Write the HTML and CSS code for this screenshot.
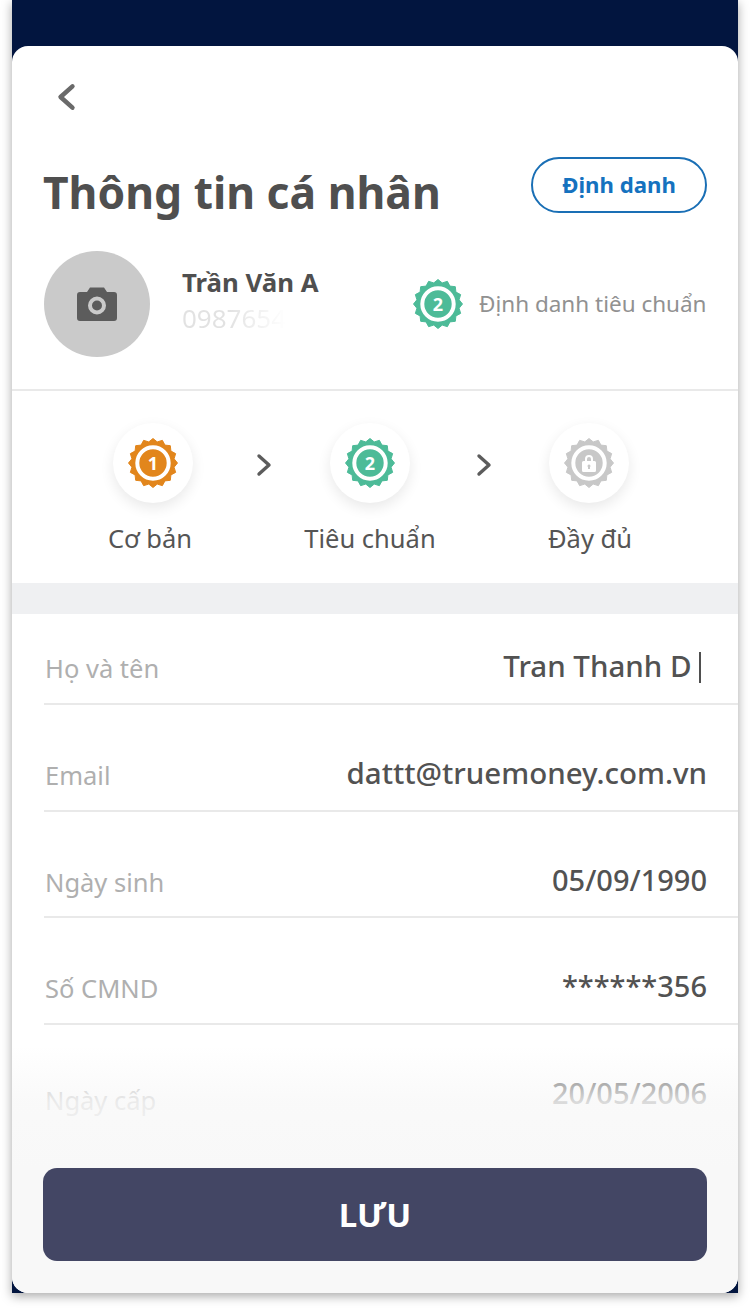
FILE: index.html
```html
<!DOCTYPE html>
<html lang="vi">
<head>
<meta charset="utf-8">
<title>Thông tin cá nhân</title>
<link rel="stylesheet" href="styles.css">
</head>
<body>
<svg class="defs" width="0" height="0" aria-hidden="true">
  <symbol id="seal" viewBox="0 0 50 50">
    <path transform="translate(25 25)" fill="currentColor" stroke="currentColor" stroke-width="1" stroke-linejoin="round" d="M0-24.500 4.190-21.090 9.380-22.640 11.950-17.880 17.320-17.320 17.880-11.950 22.640-9.380 21.090-4.190 24.500 0 21.090 4.190 22.640 9.380 17.880 11.950 17.320 17.320 11.950 17.880 9.380 22.640 4.190 21.090 0 24.500-4.190 21.090-9.380 22.640-11.950 17.880-17.320 17.320-17.880 11.950-22.640 9.380-21.090 4.190-24.500 0-21.090-4.190-22.640-9.380-17.880-11.950-17.320-17.320-11.950-17.880-9.380-22.640-4.190-21.090z"/>
    <circle cx="25" cy="25" r="15.700" fill="none" stroke="#fff" stroke-width="4"/>
  </symbol>
  <symbol id="chev" viewBox="0 0 16 24">
    <path d="M3 3l10 9-10 9" fill="none" stroke="currentColor" stroke-width="3.4" stroke-linecap="round" stroke-linejoin="round"/>
  </symbol>
</svg>
<div class="phone">
  <main class="card">
    <header class="profile">
      <div class="backbar">
        <svg class="back" viewBox="0 0 16 24"><path d="M13 3L3 12l10 9" fill="none" stroke="currentColor" stroke-width="3.800" stroke-linecap="round" stroke-linejoin="round"/></svg>
      </div>
      <div class="titlebar">
        <h1 class="title">Thông tin cá nhân</h1>
        <button class="idbtn">Định danh</button>
      </div>
      <div class="user">
        <div class="avatar">
          <svg class="cam" viewBox="0 0 40 36"><path fill-rule="evenodd" d="M13 1.500h14l3 4.500h7a3 3 0 0 1 3 3v23a3 3 0 0 1-3 3H3a3 3 0 0 1-3-3V9a3 3 0 0 1 3-3h7zM20 10.500a9 9 0 1 0 0 18 9 9 0 0 0 0-18zM20 14.500a5 5 0 1 1 0 10 5 5 0 0 1 0-10z"/></svg>
        </div>
        <div class="who">
          <div class="name">Trần Văn A</div>
          <div class="phoneno">0987654</div>
        </div>
        <div class="level">
          <span class="seal seal-green">
            <svg class="seal-svg"><use href="#seal"/></svg>
            <span class="seal-num">2</span>
          </span>
          <span class="level-text">Định danh tiêu chuẩn</span>
        </div>
      </div>
    </header>

    <section class="steps">
      <div class="step">
        <div class="step-disc disc-a"><span class="seal seal-orange"><svg class="seal-svg"><use href="#seal"/></svg><span class="seal-num">1</span></span></div>
        <div class="step-label">Cơ bản</div>
      </div>
      <svg class="chev"><use href="#chev"/></svg>
      <div class="step">
        <div class="step-disc"><span class="seal seal-green"><svg class="seal-svg"><use href="#seal"/></svg><span class="seal-num">2</span></span></div>
        <div class="step-label">Tiêu chuẩn</div>
      </div>
      <svg class="chev"><use href="#chev"/></svg>
      <div class="step">
        <div class="step-disc disc-c"><span class="seal seal-grey"><svg class="seal-svg"><use href="#seal"/></svg>
          <svg class="lock" viewBox="0 0 14 18"><path fill-rule="evenodd" d="M3 7V5a4 4 0 0 1 8 0v2h1.500A1.500 1.500 0 0 1 14 8.500v8a1.500 1.500 0 0 1-1.500 1.500h-11A1.500 1.500 0 0 1 0 16.500v-8A1.500 1.500 0 0 1 1.500 7zM5 7h4V5a2 2 0 0 0-4 0zM7 10.500a1.500 1.500 0 0 0-1 2.600V15h2v-1.900a1.500 1.500 0 0 0-1-2.600z"/></svg>
        </span></div>
        <div class="step-label">Đầy đủ</div>
      </div>
    </section>

    <div class="band"></div>

    <section class="fields">
      <div class="row row-first"><span class="key">Họ và tên</span><span class="val">Tran Thanh D<i class="caret"></i></span></div>
      <div class="row"><span class="key">Email</span><span class="val">dattt@truemoney.com.vn</span></div>
      <div class="row"><span class="key">Ngày sinh</span><span class="val val-num">05/09/1990</span></div>
      <div class="row"><span class="key">Số CMND</span><span class="val val-num">******356</span></div>
      <div class="row row-last"><span class="key">Ngày cấp</span><span class="val val-num">20/05/2006</span></div>
    </section>

    <div class="fade"></div>
    <footer class="footer">
      <button class="save">LƯU</button>
    </footer>
  </main>
</div>
</body>
</html>
```

FILE: styles.css
```css
* { box-sizing: border-box; }
html, body { margin: 0; padding: 0; background: #fff; }
body {
  width: 750px;
  height: 1308px;
  overflow: hidden;
  font-family: "Noto Sans", sans-serif;
  color: #4f4f4f;
  padding: 0 12px;
}
.defs { display: block; height: 0; }

.phone {
  width: 726px;
  height: 1293px;
  padding-top: 46px;
  background: #02153f;
  box-shadow: 0 3px 10px rgba(0, 0, 0, .35);
}
.card {
  position: relative;
  height: 1247px;
  background: #fff;
  border-radius: 16px;
  overflow: hidden;
  display: flex;
  flex-direction: column;
}

.profile {
  height: 345px;
  padding: 0 31px 0 32px;
  border-bottom: 2px solid #e9e9e9;
  flex: none;
}
.backbar { height: 102px; padding: 36px 0 0 13px; }
.back { display: block; width: 19px; height: 30px; color: #6a6a6a; }
.titlebar { display: flex; justify-content: space-between; align-items: flex-start; height: 102px; }
.title { margin: 12px 0 0 -1px; font-size: 44.400px; line-height: 64px; font-weight: 700; color: #4f4f4f; white-space: nowrap; }
.idbtn {
  width: 176px;
  height: 56px;
  margin-top: 9px;
  border: 2px solid #1a6fb5;
  border-radius: 28px;
  background: #fff;
  color: #1572bf;
  font: 700 22.200px/1 "Noto Sans", sans-serif;
}

.user { display: flex; align-items: flex-start; }
.avatar {
  width: 106px;
  height: 106px;
  margin-top: 1px;
  border-radius: 50%;
  background: #cacaca;
  display: flex;
  align-items: center;
  justify-content: center;
  flex: none;
}
.cam { width: 40px; height: 36px; fill: #5c5c5c; }
.who { margin-left: 32px; width: 231px; flex: none; }
.name { margin-top: 14px; font-size: 25.800px; line-height: 36px; font-weight: 700; color: #4f4f4f; }
.phoneno {
  font-size: 26px;
  line-height: 36px;
  width: 104px;
  background: linear-gradient(to right, #e2e2e2 45%, #fff 100%);
  -webkit-background-clip: text;
  background-clip: text;
  color: transparent;
}
.level { display: flex; align-items: center; margin-top: 29px; gap: 16px; white-space: nowrap; }
.level-text { font-size: 22.500px; line-height: 50px; color: #919191; }

.seal { position: relative; display: flex; align-items: center; justify-content: center; width: 50px; height: 50px; flex: none; }
.seal-green { color: #4dbb98; }
.seal-orange { color: #e2861c; }
.seal-grey { color: #c8c8c8; }
.seal-svg { position: absolute; inset: 0; width: 50px; height: 50px; }
.seal-num { position: relative; font-size: 18px; line-height: 1; font-weight: 700; color: #fff; }
.lock { position: relative; width: 14px; height: 18px; fill: #fff; }

.steps {
  height: 192px;
  flex: none;
  display: flex;
  align-items: flex-start;
  padding: 32px 0 0 71px;
}
.step { width: 134px; display: flex; flex-direction: column; align-items: center; flex: none; }
.step-disc {
  width: 80px;
  height: 80px;
  border-radius: 50%;
  background: #fff;
  box-shadow: 0 5px 14px rgba(0, 0, 0, .09);
  display: flex;
  align-items: center;
  justify-content: center;
}
.disc-a { margin-left: 6px; }
.disc-c { margin-left: -2px; }
.step-label { margin-top: 17px; font-size: 25.500px; line-height: 36px; color: #555; white-space: nowrap; }
.chev { width: 16px; height: 24px; margin: 30px 31px 0 39px; color: #5c5c5c; flex: none; }

.band { height: 31px; flex: none; background: #eff0f2; }

.fields { flex: none; padding-left: 32px; }
.row {
  height: 106.500px;
  padding: 16px 31px 0 0;
  display: flex;
  justify-content: space-between;
  border-bottom: 2px solid #e9e9e9;
}
.row-first { height: 91px; padding-top: 0; }
.row-last { border-bottom: 0; }
.key { padding: 36px 0 0 1px; font-size: 25.500px; line-height: 36px; color: #afafaf; }
.val { padding-top: 31px; font-size: 29.500px; line-height: 42px; font-weight: 500; color: #525252; white-space: nowrap; }
.val-num { font-size: 29px; }
.row-last .key { padding-top: 41px; }
.caret { display: inline-block; width: 2.500px; height: 31px; margin: 0 6px 0 7px; vertical-align: -6px; background: #4f4f4f; }

.fade {
  position: absolute;
  left: 0;
  right: 0;
  top: 1000px;
  height: 125px;
  background: linear-gradient(to bottom, rgba(248, 248, 248, 0), rgba(248, 248, 248, .82) 45%, #f8f8f8);
}
.footer {
  position: absolute;
  left: 0;
  right: 0;
  bottom: 0;
  height: 125px;
  padding: 0 31px;
  background: #f8f8f8;
}
.save {
  display: block;
  width: 100%;
  height: 93px;
  border: 0;
  border-radius: 14px;
  background: #434664;
  color: #fff;
  font: 700 33px/1 "Noto Sans", sans-serif;
}
```
